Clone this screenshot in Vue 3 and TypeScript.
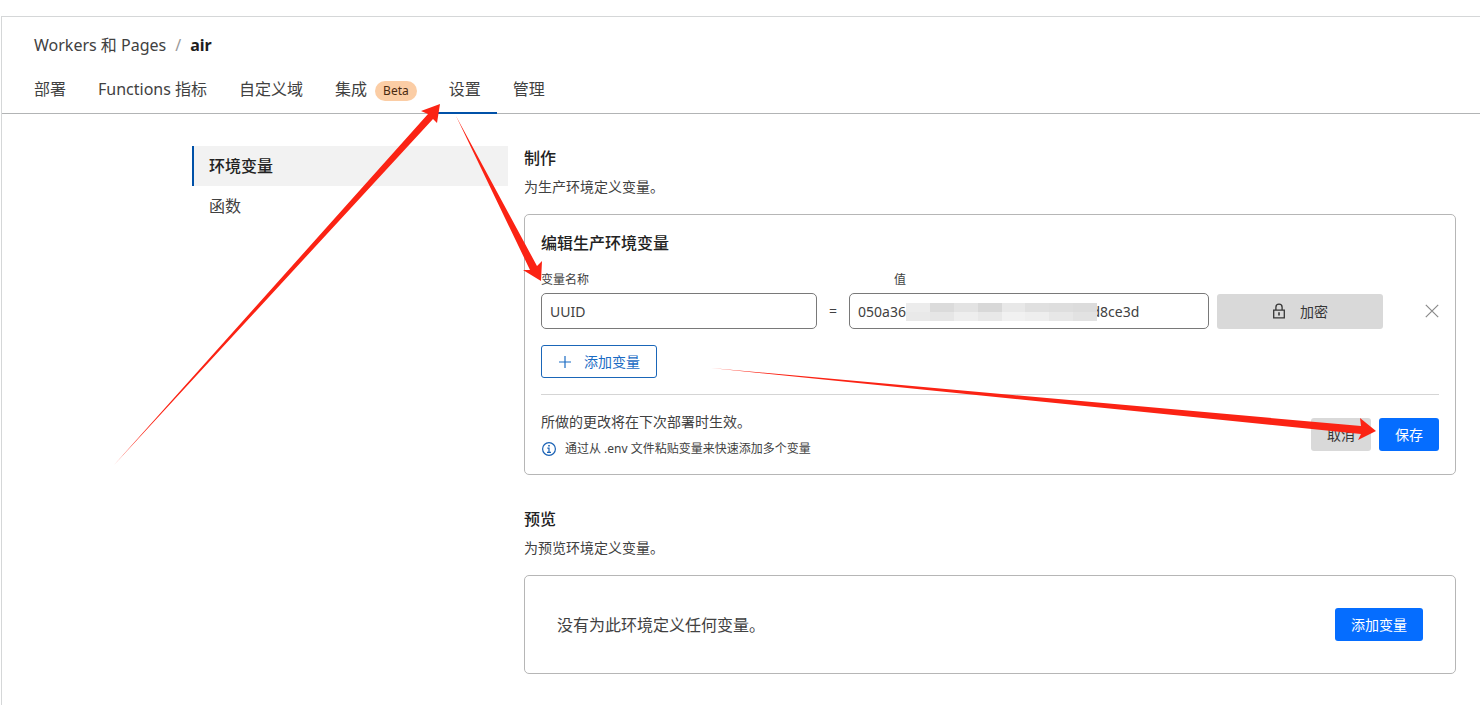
<script setup lang="ts">
import { ref } from 'vue'

interface Tab {
  label: string
  badge?: string
}

const tabs: Tab[] = [
  { label: '部署' },
  { label: 'Functions 指标' },
  { label: '自定义域' },
  { label: '集成', badge: 'Beta' },
  { label: '设置' },
  { label: '管理' },
]
const activeTab = ref('设置')

const sections = ['环境变量', '函数']
const activeSection = ref('环境变量')

const variableName = ref('UUID')
const variableValue = ref('050a36' + '\u2003'.repeat(13) + '\u2005d8ce3d')

const arrows = [
  '114,465 428,114 421,111 440,104 437,123 433,119',
  '456,116 537,266 542,261 541,281 523,270 530,270',
  '711,368 1361,426 1360,418 1376,431 1358,440 1361,434',
]

const topTiles = ['#ececec', '#dbdbdb', '#e3e3e3', '#d8d8d8', '#e8e8e8', '#e0e0e0', '#dedede', '#dcdcdc']
const bottomTiles = ['#e9e9e9', '#e6e6e6', '#eeeeee', '#e8e8e8', '#f1f1f1', '#eeeeee', '#e7e7e7', '#e2e2e2']
</script>

<template>
  <div class="page">
    <div class="frame">
      <header class="header">
        <nav class="breadcrumb" aria-label="breadcrumb">
          <a href="#">Workers 和 Pages</a>
          <span class="slash">/</span>
          <strong>air</strong>
        </nav>
        <nav class="tabs">
          <a
            v-for="tab in tabs"
            :key="tab.label"
            href="#"
            class="tab"
            :class="{ active: tab.label === activeTab }"
            @click.prevent="activeTab = tab.label"
          >
            {{ tab.label }}<span v-if="tab.badge" class="badge">{{ tab.badge }}</span>
          </a>
        </nav>
      </header>

      <div class="body">
        <nav class="sidebar">
          <a
            v-for="section in sections"
            :key="section"
            href="#"
            class="side-link"
            :class="{ active: section === activeSection }"
            @click.prevent="activeSection = section"
          >{{ section }}</a>
        </nav>

        <main class="main">
          <section>
            <h2>制作</h2>
            <p class="intro">为生产环境定义变量。</p>
            <form class="card" @submit.prevent>
              <h3>编辑生产环境变量</h3>
              <div class="grid">
                <label for="variable-name" class="name-label">变量名称</label>
                <label for="variable-value" class="value-label">值</label>
                <input id="variable-name" v-model="variableName" type="text" />
                <span class="equals">=</span>
                <div class="value-box">
                  <input id="variable-value" v-model="variableValue" type="text" />
                  <div class="mosaic" aria-hidden="true">
                    <i v-for="(tile, index) in topTiles" :key="'t' + index" :style="{ background: tile }"></i>
                    <i v-for="(tile, index) in bottomTiles" :key="'b' + index" :style="{ background: tile }"></i>
                  </div>
                </div>
                <button type="button" class="button encrypt">
                  <svg width="14" height="16" viewBox="0 0 14 16" fill="none" stroke="currentColor" stroke-width="1.3">
                    <path d="M1.7 7.2h10.6v7.6H1.7zM3.9 7V4.3a3.1 3.1 0 0 1 6.2 0V7" />
                    <path d="M7 9.3v3.2" stroke-width="1.6" />
                  </svg>
                  加密
                </button>
                <button type="button" class="remove" aria-label="删除变量">
                  <svg width="14" height="14" viewBox="0 0 14 14" fill="none" stroke="currentColor" stroke-width="1.2">
                    <path d="M.8.8l12.4 12.4M13.2.8L.8 13.2" />
                  </svg>
                </button>
              </div>
              <button type="button" class="button outline">
                <svg width="14" height="14" viewBox="0 0 14 14" fill="none" stroke="currentColor" stroke-width="1.2">
                  <path d="M7 1v12M1 7h12" />
                </svg>
                添加变量
              </button>
              <footer class="card-footer">
                <div>
                  <p class="effect">所做的更改将在下次部署时生效。</p>
                  <p class="hint">
                    <svg width="16" height="16" viewBox="0 0 16 16" fill="none" stroke="#1a62b5" stroke-width="1.2">
                      <circle cx="8" cy="8" r="6.4" />
                      <path d="M6.3 7.2H8v4M6 11.4h4" />
                      <path d="M8 4v1.5" stroke-width="1.6" />
                    </svg>
                    通过从 .env 文件粘贴变量来快速添加多个变量
                  </p>
                </div>
                <div class="actions">
                  <button type="button" class="button">取消</button>
                  <button type="submit" class="button primary">保存</button>
                </div>
              </footer>
            </form>
          </section>

          <section class="preview">
            <h2>预览</h2>
            <p class="intro">为预览环境定义变量。</p>
            <div class="card empty">
              <p>没有为此环境定义任何变量。</p>
              <button type="button" class="button primary">添加变量</button>
            </div>
          </section>
        </main>
      </div>
    </div>

    <svg class="arrows" width="1480" height="705" viewBox="0 0 1480 705" aria-hidden="true">
      <polygon v-for="points in arrows" :key="points" :points="points" fill="#fb2314" />
    </svg>
  </div>
</template>

<style>
body {
  margin: 0;
  background: #fff;
}
</style>

<style scoped>
.page {
  position: relative;
  box-sizing: border-box;
  min-height: 100vh;
  padding: 16px 0 0 1px;
  overflow: hidden;
  display: flex;
  color: #414141;
  font-family: "Noto Sans", "Noto Sans CJK SC", sans-serif;
  font-size: 16px;
  line-height: 24px;
}

.frame {
  flex: 1;
  min-width: 0;
  border-top: 1px solid #d5d7d8;
  border-left: 1px solid #d5d7d8;
}

a {
  color: inherit;
  text-decoration: none;
}

h2,
h3,
p {
  margin: 0;
}

h2,
h3 {
  font-size: 16px;
  font-weight: 500;
  line-height: 24px;
  color: #222;
}

.header {
  padding: 16px 32px 0;
  border-bottom: 1px solid #b2b4b5;
}

.breadcrumb {
  display: flex;
  gap: 9px;
}

.slash {
  color: #999;
}

.breadcrumb strong {
  color: #1d1d1d;
  font-weight: 700;
}

.tabs {
  display: flex;
  margin: 12px -16px -1px;
}

.tab {
  display: flex;
  align-items: center;
  padding: 6px 16px 10px;
  height: 27px;
  border-bottom: 2px solid transparent;
  white-space: nowrap;
}

.tab.active {
  border-color: #0051a8;
}

.badge {
  margin: 4px 0 0 8px;
  padding: 0 8px;
  border-radius: 10px;
  background: #fbcda5;
  color: #4a2a10;
  font-size: 12px;
  line-height: 20px;
}

.body {
  display: flex;
  gap: 16px;
  padding: 32px 24px 31px 190px;
}

.sidebar {
  flex: 0 0 25%;
}

.side-link {
  display: block;
  padding: 8px 15px;
  border-left: 2px solid transparent;
}

.side-link.active {
  background: #f2f2f2;
  border-color: #0051a8;
  color: #222;
  font-weight: 500;
}

.main {
  flex: 1;
  min-width: 0;
}

.intro {
  margin: 6px 0 17px;
  font-size: 14px;
  line-height: 21px;
}

.card {
  padding: 16px;
  border: 1px solid #b6b6b6;
  border-radius: 5px;
}

.grid {
  display: grid;
  grid-template-columns: 276fr 32px 360fr 8px 166fr 56px;
  align-items: center;
  margin-top: 16px;
}

.grid label {
  font-size: 12px;
  line-height: 18px;
  margin-bottom: 4px;
}

.name-label {
  grid-column: 1 / 3;
}

.value-label {
  grid-column: 3 / 7;
  padding-left: 45px;
}

input {
  box-sizing: border-box;
  width: 100%;
  height: 36px;
  padding: 0 8px;
  border: 1px solid #797979;
  border-radius: 5px;
  background: #fff;
  color: #414141;
  font: inherit;
  font-size: 14px;
}

.equals {
  font-size: 14px;
  text-align: center;
}

.value-box {
  position: relative;
}

.mosaic {
  position: absolute;
  left: 57px;
  top: 10px;
  width: 191px;
  height: 18px;
  display: grid;
  grid-template-columns: repeat(8, 1fr);
  grid-template-rows: 1fr 1fr;
}

.button {
  display: inline-flex;
  align-items: center;
  justify-content: center;
  box-sizing: border-box;
  height: 33px;
  padding: 0 15px;
  border: 1px solid transparent;
  border-radius: 3px;
  background: #d9d9d9;
  color: #363636;
  font: inherit;
  font-size: 14px;
  line-height: 21px;
  cursor: pointer;
}

.encrypt {
  grid-column: 5;
  height: 35px;
  gap: 14px;
}

.remove {
  display: flex;
  justify-self: end;
  padding: 0;
  border: 0;
  background: none;
  color: #8a8a8a;
}

.outline {
  margin-top: 16px;
  padding: 0 16px;
  gap: 12px;
  background: #fff;
  border-color: #1a66b8;
  color: #1b6cc4;
}

.primary {
  background: #056dff;
  color: #fff;
}

.card-footer {
  display: flex;
  justify-content: space-between;
  align-items: center;
  margin-top: 16px;
  padding-top: 16px;
  border-top: 1px solid #d5d5d5;
}

.effect {
  font-size: 14px;
  line-height: 21px;
}

.hint {
  display: flex;
  align-items: center;
  gap: 8px;
  margin-top: 8px;
  font-size: 12px;
  line-height: 18px;
}

.actions {
  display: flex;
  gap: 8px;
}

.preview {
  margin-top: 32px;
}

.empty {
  display: flex;
  align-items: center;
  justify-content: space-between;
  padding: 32px;
}

.arrows {
  position: absolute;
  top: 0;
  left: 0;
  pointer-events: none;
}
</style>
